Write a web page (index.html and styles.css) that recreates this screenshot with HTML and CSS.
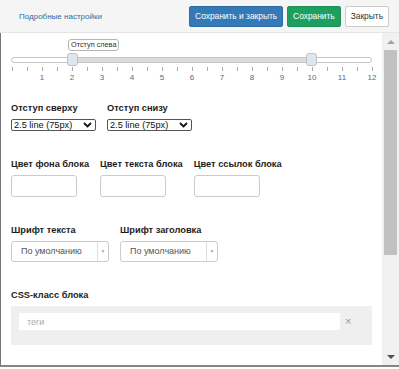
FILE: index.html
```html
<!DOCTYPE html>
<html lang="ru">
<head>
  <meta charset="UTF-8" />
  <title>Настройки блока</title>
  <link rel="stylesheet" href="styles.css">
</head>
<body>

<div class="dialog">
  <header class="top">
    <a class="more" href="#">Подробные настройки</a>
    <div class="actions">
      <button class="btn btn-blue">Сохранить и закрыть</button>
      <button class="btn btn-green">Сохранить</button>
      <button class="btn btn-white">Закрыть</button>
    </div>
  </header>

  <div class="body">
    <div class="content">

      <!-- Slider -->
      <div class="slider">
        <div class="tip">Отступ слева</div>
        <div class="track"></div>
        <span class="handle h-left"></span>
        <span class="handle h-right"></span>
        <div class="ticks"></div>
        <div class="nums">
          <span>1</span><span>2</span><span>3</span><span>4</span><span>5</span><span>6</span>
          <span>7</span><span>8</span><span>9</span><span>10</span><span>11</span><span>12</span>
        </div>
      </div>

      <!-- Paddings -->
      <div class="row first">
        <div class="field">
          <label>Отступ сверху</label>
          <div class="sel">
            <select class="native"><option>2.5 line (75px)</option></select>
            <svg class="chev" width="9" height="6" viewBox="0 0 9 6"><polyline points="1,1 4.5,4.5 8,1" fill="none" stroke="#111" stroke-width="1.8"/></svg>
          </div>
        </div>
        <div class="field">
          <label>Отступ снизу</label>
          <div class="sel">
            <select class="native"><option>2.5 line (75px)</option></select>
            <svg class="chev" width="9" height="6" viewBox="0 0 9 6"><polyline points="1,1 4.5,4.5 8,1" fill="none" stroke="#111" stroke-width="1.8"/></svg>
          </div>
        </div>
      </div>

      <!-- Colors -->
      <div class="row">
        <div class="field">
          <label>Цвет фона блока</label>
          <input class="color" type="text">
        </div>
        <div class="field">
          <label>Цвет текста блока</label>
          <input class="color" type="text">
        </div>
        <div class="field">
          <label>Цвет ссылок блока</label>
          <input class="color" type="text">
        </div>
      </div>

      <!-- Fonts -->
      <div class="row">
        <div class="field">
          <label>Шрифт текста</label>
          <div class="pick"><span class="pick-text">По умолчанию</span><span class="pick-arrow">▼</span></div>
        </div>
        <div class="field">
          <label>Шрифт заголовка</label>
          <div class="pick"><span class="pick-text">По умолчанию</span><span class="pick-arrow">▼</span></div>
        </div>
      </div>

      <!-- CSS class -->
      <div class="field">
        <label>CSS-класс блока</label>
        <div class="tags">
          <input class="tag-input" type="text" placeholder="теги">
          <span class="tag-clear">×</span>
        </div>
      </div>

    </div>

    <div class="scrollbar">
      <div class="sb-btn"><span class="arr-up"></span></div>
      <div class="sb-track"><div class="thumb"></div></div>
      <div class="sb-btn"><span class="arr-down"></span></div>
    </div>
  </div>
</div>

</body>
</html>
```

FILE: styles.css
```css
body {
  margin: 0;
  font-family: 'Liberation Sans', Arial, sans-serif;
  color: #222;
  background: #fff;
}
.dialog {
  width: 399px;
}
.top {
  height: 32px;
  background: #f5f5f5;
  border-bottom: 1px solid #e5e5e5;
  display: flex;
  align-items: center;
  justify-content: space-between;
  padding: 0 10px 0 19px;
}
.more {
  color: #2f6ca3;
  font-size: 8px;
  text-decoration: none;
}
.actions {
  display: flex;
  gap: 4px;
}
.btn {
  font-family: 'Liberation Sans', Arial, sans-serif;
  font-size: 8.4px;
  height: 21px;
  padding: 0 5px;
  border-radius: 2px;
  border: 1px solid transparent;
  cursor: pointer;
}
.btn-blue {
  background: #337ab7;
  border-color: #2e6da4;
  color: white;
}
.btn-green {
  background: #1f9f5f;
  border-color: #1c9357;
  color: white;
}
.btn-white {
  background: white;
  border-color: #ccc;
  color: #333;
}
.body {
  display: flex;
  height: 332px;
  border-left: 1px solid #777;
  border-bottom: 2px solid #858585;
}
.content {
  flex: 1;
  overflow: hidden;
  padding-left: 10px;
}

/* slider */
.slider {
  position: relative;
  padding-top: 24px;
}
.tip {
  position: absolute;
  left: 57px;
  top: 6px;
  height: 10px;
  padding: 0 2px;
  border: 1px solid #b5b5b5;
  border-radius: 3px;
  background: white;
  font-size: 7.3px;
  line-height: 10px;
  color: #333;
}
.track {
  width: 359px;
  height: 4px;
  border: 1px solid #c4c4c4;
  border-radius: 4px;
  background: linear-gradient(to right, #fff 61px, #dcdcdc 61px 300px, #fff 300px);
}
.handle {
  position: absolute;
  top: 20px;
  width: 9px;
  height: 11px;
  border: 1px solid #c2c2c2;
  border-radius: 3px;
  background: #dee7ee;
}
.h-left {
  left: 56px;
}
.h-right {
  left: 295px;
}
.ticks {
  margin: 4px 0 0 1px;
  width: 361px;
  height: 4px;
  background: repeating-linear-gradient(to right, #aaa 0 1px, transparent 1px 15px);
}
.nums {
  display: flex;
  margin: 2px 0 0 16px;
  font-size: 8px;
  line-height: 10px;
  color: #666;
}
.nums span {
  width: 30px;
  flex: none;
  text-align: center;
}

/* fields */
.row {
  display: flex;
  gap: 11px;
  margin-bottom: 28px;
}
.row.first {
  margin-top: 20px;
}
.field label {
  display: block;
  font-size: 9.25px;
  font-weight: bold;
  line-height: 11px;
  margin-bottom: 5px;
  color: #1d1d1d;
}
.sel {
  position: relative;
  width: 85px;
}
.native {
  appearance: none;
  display: block;
  box-sizing: border-box;
  width: 85px;
  height: 12px;
  padding: 0 0 0 2px;
  margin: 0;
  font-family: 'Liberation Sans', Arial, sans-serif;
  font-size: 9.2px;
  line-height: 10px;
  color: #111;
  border: 1px solid #555;
  border-radius: 2px;
  background: white;
}
.chev {
  position: absolute;
  right: 4px;
  top: 3px;
}
.color {
  display: block;
  box-sizing: border-box;
  width: 66px;
  height: 22px;
  border: 1px solid #ccc;
  border-radius: 3px;
  margin: 0;
}
.pick {
  display: flex;
  width: 98px;
  height: 21px;
  box-sizing: border-box;
  border: 1px solid #ccc;
  border-radius: 3px;
  background: white;
}
.pick-text {
  flex: 1;
  padding-left: 9px;
  font-size: 9px;
  line-height: 19px;
  color: #555;
}
.pick-arrow {
  width: 10px;
  border-left: 1px solid #ddd;
  font-size: 5px;
  line-height: 19px;
  color: #aaa;
  text-align: center;
}
.tags {
  display: flex;
  align-items: center;
  width: 345px;
  padding: 7px 8px 15px;
  background: #efefef;
}
.tag-input {
  width: 321px;
  height: 17px;
  box-sizing: border-box;
  border: none;
  padding: 0 8px;
  margin: 0;
  font-family: 'Liberation Sans', Arial, sans-serif;
  font-size: 9px;
}
.tag-input::placeholder {
  color: #aaa;
}
.tag-clear {
  margin-left: 5px;
  color: #999;
  font-size: 11px;
  line-height: 17px;
}

/* scrollbar */
.scrollbar {
  width: 17px;
  background: #f1f1f1;
  display: flex;
  flex-direction: column;
}
.sb-btn {
  height: 17px;
  display: flex;
  align-items: center;
  justify-content: center;
}
.sb-track {
  flex: 1;
}
.thumb {
  height: 205px;
  margin: 0 2px;
  background: #c1c1c1;
}
.arr-up {
  border-left: 4px solid transparent;
  border-right: 4px solid transparent;
  border-bottom: 4px solid #a3a3a3;
}
.arr-down {
  border-left: 4px solid transparent;
  border-right: 4px solid transparent;
  border-top: 4px solid #505050;
}
```
